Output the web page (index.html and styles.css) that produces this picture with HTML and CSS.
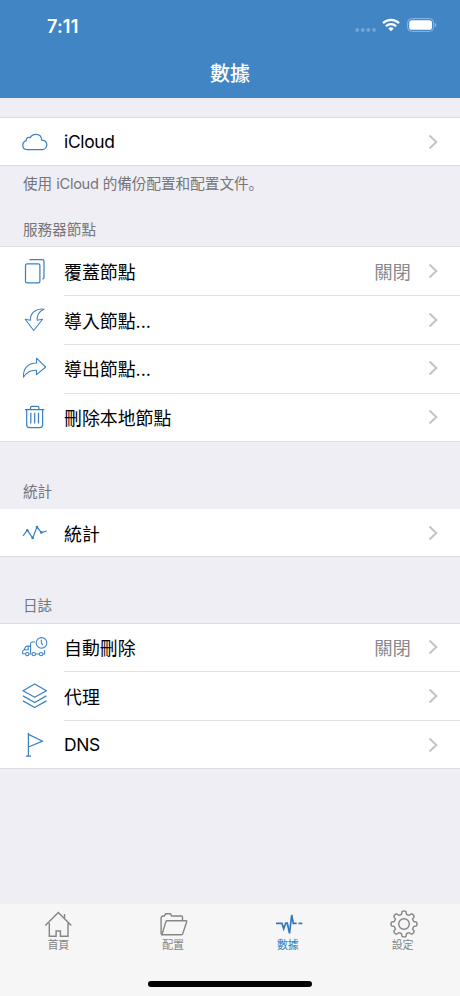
FILE: index.html
```html
<!DOCTYPE html>
<html lang="zh-Hant">
  <head>
    <meta charset="UTF-8" />
    <meta name="viewport" content="width=device-width,initial-scale=1.0" />
    <title>數據</title>
    <link rel="stylesheet" href="styles.css">
  </head>
  <body>
    <svg class="defs">
      <symbol id="chevron" viewBox="0 0 10 16">
        <path d="M1.5 1.5L8.3 8L1.5 14.5" />
      </symbol>
    </svg>
    <header class="header">
      <div class="status-bar">
        <span class="time">7:11</span>
        <div class="status-icons">
          <svg class="signal" width="22" height="14" viewBox="0 0 22 14">
            <circle cx="2.2" cy="11.9" r="1.9" />
            <circle cx="7.8" cy="11.9" r="1.9" />
            <circle cx="13.4" cy="11.9" r="1.9" />
            <circle cx="19" cy="11.9" r="1.9" />
          </svg>
          <svg class="wifi" width="18" height="14" viewBox="0 0 18 14">
            <path d="M1 5.2A11.5 11.5 0 0 1 17 5.2" />
            <path d="M3.9 8.2A7.3 7.3 0 0 1 14.1 8.2" />
            <path class="wifi-dot" d="M6.3 10.4Q9 8.3 11.7 10.4L9 13.3Z" />
          </svg>
          <svg class="battery" width="30" height="14" viewBox="0 0 30 14">
            <rect class="battery-case" x="0.6" y="0.6" width="26" height="12.8" rx="4" />
            <rect x="2.2" y="2.2" width="22.8" height="9.6" rx="2.6" />
            <path class="battery-cap" d="M27.8 4.8Q29.4 5.6 29.4 7Q29.4 8.4 27.8 9.2Z" />
          </svg>
        </div>
      </div>
      <h1 class="title">數據</h1>
    </header>

    <main class="content">
      <section class="section">
        <div class="list">
          <div class="row">
            <svg class="icon" viewBox="0 0 28 28"><path d="M6 21.5C3.2 21.5 1.8 19.6 1.8 17.2C1.8 14.9 3.3 13.2 5.3 12.6C5 10.2 7.2 8.7 9.2 9.6C10.3 7.4 12.5 6.3 14.8 6.3C18.4 6.3 20.6 8.9 20.8 12.2C23.9 12.1 25.8 14.1 25.8 16.7C25.8 19.4 23.9 21.5 21.2 21.5Z" /></svg>
            <span class="label latin">iCloud</span>
            <svg class="chevron"><use href="#chevron" /></svg>
          </div>
        </div>
        <p class="note">使用 <span class="note-latin">iCloud</span> 的備份配置和配置文件<span lang="zh-Hans">。</span></p>
      </section>

      <section class="section">
        <h2 class="heading">服務器節點</h2>
        <div class="list">
          <div class="row">
            <svg class="icon" viewBox="0 0 28 28">
              <rect x="4.5" y="6.8" width="14.4" height="19" rx="1.6" />
              <path d="M8.5 2.7H21.3Q23 2.7 23 4.4V20.2Q23 21.8 21.4 22.2" />
            </svg>
            <span class="label">覆蓋節點</span>
            <span class="value">關閉</span>
            <svg class="chevron"><use href="#chevron" /></svg>
          </div>
          <div class="row">
            <svg class="icon thin" viewBox="0 0 28 28"><path d="M23 3.2C15 2.2 9.2 6.6 9.4 14.2L4.2 13.3L12.7 24.5L21.6 13.2L16.2 14.2C15.8 9.5 17.6 5.6 23 3.2Z" /></svg>
            <span class="label">導入節點...</span>
            <svg class="chevron"><use href="#chevron" /></svg>
          </div>
          <div class="row">
            <svg class="icon thin" viewBox="0 0 28 28"><path d="M2.5 23.2C2 14.5 6.8 9 15.5 9V4.2L24.6 13L15.5 20.6V16.2C9.4 15.8 5.6 18 2.5 23.2Z" /></svg>
            <span class="label">導出節點...</span>
            <svg class="chevron"><use href="#chevron" /></svg>
          </div>
          <div class="row">
            <svg class="icon" viewBox="0 0 28 28">
              <path d="M4 6.6H23.4M9.5 6.6V5Q9.5 3.4 11 3.4H16.4Q17.9 3.4 17.9 5V6.6" />
              <path d="M5.7 6.8V21.8Q5.7 24.6 8.4 24.6H18.9Q21.6 24.6 21.6 21.8V6.8M9.8 9.8V20.4M13.7 9.8V20.4M17.5 9.8V20.4" />
            </svg>
            <span class="label">刪除本地節點</span>
            <svg class="chevron"><use href="#chevron" /></svg>
          </div>
        </div>
      </section>

      <section class="section stats">
        <h2 class="heading">統計</h2>
        <div class="list">
          <div class="row">
            <svg class="icon" viewBox="0 0 28 28">
              <path d="M2 17L6.3 11.2L11.7 19.2L16 7.9L20.3 13.6L25.7 12" />
              <g class="dots">
                <circle cx="6.3" cy="11.2" r="1.3" />
                <circle cx="11.7" cy="19" r="1.3" />
                <circle cx="16" cy="8.1" r="1.3" />
                <circle cx="20.3" cy="13.4" r="1.3" />
              </g>
            </svg>
            <span class="label">統計</span>
            <svg class="chevron"><use href="#chevron" /></svg>
          </div>
        </div>
      </section>

      <section class="section logs">
        <h2 class="heading">日誌</h2>
        <div class="list">
          <div class="row">
            <svg class="icon thin" viewBox="0 0 28 28">
              <circle cx="20.5" cy="9.9" r="5.3" />
              <path d="M20.3 6.7V10.1L22 11.9M14 8.9H11.2Q9.6 8.9 9.6 10.5V20.3M9.6 13.1H6.3Q4.8 13.1 4.2 14.5L3.2 16.7Q1.6 17.3 1.6 18.7V20.7H4.4M3.4 16.7H7.2V13.3M8.2 21H10.9M14.7 21H18.2M22 21H23.6V16.9" />
              <circle cx="6.3" cy="21.1" r="1.7" />
              <circle cx="12.8" cy="21.1" r="1.7" />
              <circle cx="20.1" cy="21.1" r="1.7" />
            </svg>
            <span class="label">自動刪除</span>
            <span class="value">關閉</span>
            <svg class="chevron"><use href="#chevron" /></svg>
          </div>
          <div class="row">
            <svg class="icon" viewBox="0 0 28 28"><path d="M13.7 2L25.4 8.7L13.7 15.3L2 8.7ZM2 13.9L13.7 20.5L25.4 13.9M2 18.9L13.7 25.5L25.4 18.9" /></svg>
            <span class="label">代理</span>
            <svg class="chevron"><use href="#chevron" /></svg>
          </div>
          <div class="row">
            <svg class="icon" viewBox="0 0 28 28"><path d="M7.4 1.8V25.2M5 25.2H10M7.4 3.4L21.6 10.2L7.4 16" /></svg>
            <span class="label latin">DNS</span>
            <svg class="chevron"><use href="#chevron" /></svg>
          </div>
        </div>
      </section>
    </main>

    <nav class="tab-bar">
      <a class="tab">
        <svg class="tab-icon" viewBox="0 0 30 30"><path d="M2.3 16.4L15.3 3.6L28.3 16.4M6.3 14V27.2H13.1V22H17.4V27.2H25V14M21.5 9.2V5" /></svg>
        <span>首頁</span>
      </a>
      <a class="tab">
        <svg class="tab-icon" viewBox="0 0 30 30">
          <path d="M3.8 25.6Q3.1 25.4 3.1 24.6V8.2L4.5 7H6.3L7.7 4.8H12.3L13.7 7H23.7Q24.5 7 24.5 7.8V11.6" />
          <path d="M9.1 11.7H27.9Q29 11.7 28.7 12.7L24.7 24.9Q24.4 25.8 23.5 25.8H3.9L7.9 12.6Q8.2 11.7 9.1 11.7Z" />
        </svg>
        <span>配置</span>
      </a>
      <a class="tab active">
        <svg class="tab-icon" viewBox="0 0 30 30"><path d="M3 14.4H9L10.7 19.8L12.7 14.2H14.3L16.5 24.4L18.7 6L20.3 14.4H23.7M25.5 14.4H29.3" /></svg>
        <span>數據</span>
      </a>
      <a class="tab">
        <svg class="tab-icon" viewBox="0 0 30 30">
          <path id="gear" />
          <circle cx="16" cy="15" r="5.3" />
        </svg>
        <span>設定</span>
      </a>
    </nav>
    <div class="home-indicator"></div>
    <script>
      // outline of the settings gear, 8 rounded teeth
      let points = [];
      for (let i = 0; i < 160; i++) {
        let a = (i / 160) * Math.PI * 2,
          r = 11.4 + 1.55 * Math.tanh(2.6 * Math.cos(8 * a));
        points.push((16 + r * Math.cos(a)).toFixed(2) + " " + (15 + r * Math.sin(a)).toFixed(2));
      }
      document.getElementById("gear").setAttribute("d", "M" + points.join("L") + "Z");
    </script>
  </body>
</html>
```
FILE: styles.css
```css
* {
  box-sizing: border-box;
}
body {
  margin: 0;
  height: 996px;
  display: flex;
  flex-direction: column;
  overflow: hidden;
  background-color: #efeef4;
  color: #000;
  font-family: Inter, "Noto Sans CJK TC", sans-serif;
}
svg {
  fill: none;
  flex-shrink: 0;
}
.defs {
  position: absolute;
  width: 0;
  height: 0;
}
.header {
  height: 98px;
  flex-shrink: 0;
  background-color: #4285c5;
  color: #fff;
}
.status-bar {
  display: flex;
  justify-content: space-between;
  height: 48px;
  padding: 15px 23px 0 47px;
}
.time {
  font-size: 18.2px;
  font-weight: 600;
  line-height: 22px;
  letter-spacing: 0.1px;
}
.status-icons {
  display: flex;
  padding-top: 3px;
}
.signal {
  fill: #73a7d8;
  margin-right: 5px;
}
.wifi {
  stroke: #fff;
  stroke-width: 2.3;
  margin-right: 7px;
}
.wifi-dot {
  fill: #fff;
  stroke: none;
}
.battery {
  fill: #fff;
}
.battery-case {
  fill: none;
  stroke: #8db7df;
}
.battery-cap {
  fill: #8db7df;
}
.title {
  margin: 0;
  text-align: center;
  font-size: 20px;
  font-weight: 500;
  line-height: 52px;
}
.content {
  flex: 1;
  padding-top: 19.4px;
}
.list {
  background-color: #fff;
  box-shadow: inset 0 1px #dcdce0, inset 0 -1px #dcdce0;
}
.row {
  display: flex;
  align-items: center;
  position: relative;
  height: 48.8px;
  padding: 0 22px 0 21px;
}
.row + .row::before {
  content: "";
  position: absolute;
  top: 0;
  left: 64px;
  right: 0;
  height: 1px;
  background-color: #e2e2e5;
}
.icon {
  width: 28px;
  height: 28px;
  margin-right: 15px;
  stroke: #3c80c2;
  stroke-width: 1.25;
  stroke-linejoin: round;
}
.thin {
  stroke-width: 1.05;
}
.dots {
  fill: #3c80c2;
  stroke: none;
}
.label {
  flex: 1;
  font-size: 17.9px;
}
.latin {
  font-size: 17.4px;
  letter-spacing: -0.3px;
}
.value {
  margin-right: 17px;
  color: #8a8a8e;
  font-size: 18.4px;
}
.chevron {
  width: 10px;
  height: 16px;
  stroke: #c4c4c7;
  stroke-width: 2;
}
.note,
.heading {
  margin: 0;
  padding-left: 23px;
  color: #75757a;
  font-size: 14.6px;
  font-weight: 400;
  line-height: 20px;
}
.note {
  padding-top: 8px;
  font-family: Inter, "Noto Sans CJK SC", sans-serif;
}
.note-latin {
  letter-spacing: -0.3px;
}
.heading {
  padding-top: 26px;
  padding-bottom: 6.2px;
}
.stats .heading {
  padding-top: 40.5px;
  padding-bottom: 6.5px;
}
.stats .list {
  box-shadow: inset 0 -1px #dcdce0;
}
.stats .row {
  height: 48px;
}
.logs .heading {
  padding-top: 39.8px;
  padding-bottom: 6.2px;
}
.tab-bar {
  display: flex;
  height: 92px;
  flex-shrink: 0;
  padding-top: 5px;
  padding-left: 1px;
  background-color: #f6f6f6;
}
.tab {
  flex: 1;
  display: flex;
  flex-direction: column;
  align-items: center;
  color: #858585;
  font-size: 11px;
  line-height: 12px;
}
.tab-icon {
  width: 30px;
  height: 30px;
  stroke: #858585;
  stroke-width: 1.4;
}
.active {
  color: #2f79bd;
}
.active .tab-icon {
  stroke: #2f79bd;
  stroke-width: 1.7;
}
.home-indicator {
  position: absolute;
  left: 148px;
  top: 981px;
  width: 164px;
  height: 6px;
  border-radius: 3px;
  background-color: #000;
}
```
